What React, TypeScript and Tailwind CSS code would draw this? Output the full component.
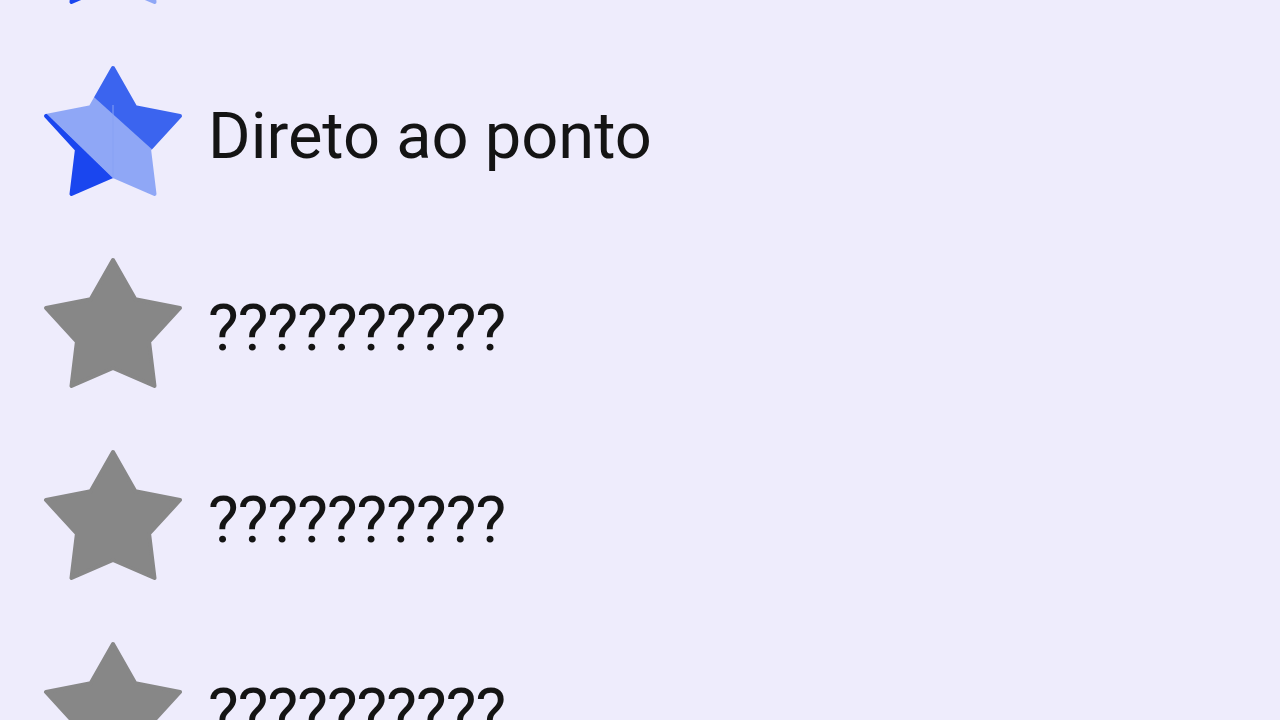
import React from "react";

const STAR =
  "70,3 92.3,42.3 137,51 106.1,84.7 111.5,129 70,111 28.5,129 33.9,84.7 3,51 47.7,42.3";

function BlueStar({ id }: { id: string }) {
  return (
    <svg width="140" height="132" viewBox="0 0 140 132" className="shrink-0">
      <defs>
        <mask id={id} maskUnits="userSpaceOnUse" x="0" y="0" width="140" height="132">
          <polygon points={STAR} fill="white" stroke="white" strokeWidth="4" strokeLinejoin="round" />
        </mask>
      </defs>
      <g mask={`url(#${id})`}>
        <rect x="0" y="0" width="140" height="132" fill="#3b64ef" />
        <polygon points="-10,-22.8 150,121.2 150,191 -10,35.8" fill="#8fa7f6" />
        <polygon points="-10,35.8 150,191 -10,191" fill="#1a46ef" />
        <line x1="70" y1="40" x2="70" y2="112" stroke="#87a1f4" strokeWidth="1" />
      </g>
    </svg>
  );
}

function GreyStar() {
  return (
    <svg width="140" height="132" viewBox="0 0 140 132" className="shrink-0">
      <polygon points={STAR} fill="#878787" stroke="#878787" strokeWidth="4" strokeLinejoin="round" />
    </svg>
  );
}

const rows = [
  { fav: true, label: "" },
  { fav: true, label: "Direto ao ponto" },
  { fav: false, label: "??????????" },
  { fav: false, label: "??????????" },
  { fav: false, label: "??????????" },
];

export default function App() {
  return (
    <div className="h-[720px] w-[1280px] overflow-hidden bg-[#eeecfc]">
      <div className="-mt-[157px] flex flex-col">
        {rows.map((r, i) => (
          <div key={i} className="flex h-[192px] items-center gap-[25px] pl-[43px]">
            {r.fav ? <BlueStar id={`mask${i}`} /> : <GreyStar />}
            <span
              className={
                r.label.startsWith("?")
                  ? "pt-[10px] font-['Roboto',sans-serif] text-[65px] leading-none tracking-[-1px] text-[#141414]"
                  : "pt-[10px] font-['Roboto',sans-serif] text-[65px] leading-none text-[#141414]"
              }
            >
              {r.label}
            </span>
          </div>
        ))}
      </div>
    </div>
  );
}
